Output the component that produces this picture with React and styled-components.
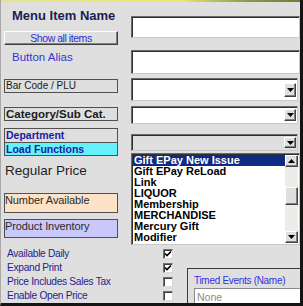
import React from 'react';
import styled, { createGlobalStyle } from 'styled-components';

const GlobalStyle = createGlobalStyle`
  html, body {
    margin: 0;
    padding: 0;
    background: #e0dfe0;
  }
  body {
    font-family: "Liberation Sans", Arial, sans-serif;
  }
  * {
    box-sizing: border-box;
  }
`;

const Window = styled.div`
  width: 303px;
  height: 306px;
  overflow: hidden;
  display: flex;
  flex-direction: column;
  background: #e0dfe0;
  border-left: 1px solid #a8a8a8;
  border-right: 3px solid #141414;
  border-bottom: 3px solid #141414;
`;

const TopStrip = styled.div`
  flex: none;
  height: 2px;
  background: linear-gradient(to right, #e4e290 0%, #ece872 60%, #8c9a4a 82%, #6e7e3a 100%);
`;

const TopSection = styled.div`
  display: flex;
  gap: 13px;
  padding-left: 3px;
`;

const LeftCol = styled.div`
  width: 114px;
  display: flex;
  flex-direction: column;
  padding-top: 6px;
`;

const RightCol = styled.div`
  width: 169px;
  display: flex;
  flex-direction: column;
  align-items: flex-start;
  padding-top: 14px;
`;

const Title = styled.div`
  margin-left: 8px;
  font-size: 13px;
  font-weight: bold;
  line-height: 15px;
  color: #1c1c50;
  white-space: nowrap;
`;

const RaisedButton = styled.div`
  margin-top: 8px;
  height: 14px;
  background: #e0dfe0;
  border: 1px solid;
  border-color: #ffffff #404040 #404040 #ffffff;
  box-shadow: inset -1px -1px 0 #808080;
  font-size: 10.5px;
  letter-spacing: -0.45px;
  line-height: 12px;
  text-align: center;
  color: #2b2bd6;
`;

const AliasLabel = styled.div`
  margin-top: 5px;
  margin-left: 8px;
  font-size: 11.5px;
  line-height: 15px;
  color: #3434d0;
`;

const FieldTag = styled.div`
  margin-top: ${(p) => p.$mt}px;
  height: 14px;
  padding-left: 1px;
  border: 1px solid #505050;
  font-size: ${(p) => (p.$bold ? '11.5px' : '10px')};
  font-weight: ${(p) => (p.$bold ? 'bold' : 'normal')};
  line-height: 12px;
  color: #1a1a1a;
  white-space: nowrap;
`;

const DeptGroup = styled.div`
  margin-top: 7px;
  border: 1px solid #505050;
`;

const DeptRow = styled.div`
  height: 13px;
  padding-left: 1px;
  background: ${(p) => (p.$load ? '#66f2fa' : 'transparent')};
  border-top: ${(p) => (p.$load ? '1px solid #505050' : 'none')};
  font-size: 10.5px;
  font-weight: bold;
  line-height: 12px;
  color: #1a1aa8;
`;

const PriceLabel = styled.div`
  margin-top: 7px;
  padding-left: 1px;
  font-size: 13.5px;
  line-height: 16px;
  color: #1e1e1e;
`;

const ColorBox = styled.div`
  margin-top: ${(p) => p.$mt}px;
  height: ${(p) => p.$h}px;
  background: ${(p) => p.$bg};
  border: 1px solid #505050;
  font-size: 11px;
  letter-spacing: -0.1px;
  line-height: 13px;
  color: #2a2a2a;
`;

const Sunken = styled.div`
  margin-top: ${(p) => p.$mt}px;
  width: ${(p) => p.$w}px;
  height: ${(p) => p.$h}px;
  flex: none;
  display: flex;
  align-items: center;
  justify-content: flex-end;
  padding-right: 1px;
  background: ${(p) => (p.$disabled ? '#e0dfe0' : '#ffffff')};
  border: 1px solid;
  border-color: #6a6a6a #c8c8c8 #c8c8c8 #6a6a6a;
  box-shadow: inset 1px 1px 0 #303030;
`;

const ArrowButton = styled.div`
  width: 12px;
  height: ${(p) => p.$h}px;
  display: flex;
  align-items: center;
  justify-content: center;
  background: #e0dfe0;
  border: 1px solid;
  border-color: #ffffff #404040 #404040 #ffffff;
  box-shadow: inset -1px -1px 0 #808080;
`;

const ListBox = styled.div`
  margin-top: 2px;
  width: 169px;
  height: 92px;
  display: flex;
  padding: 1px;
  background: #ffffff;
  border: 1px solid;
  border-color: #6a6a6a #c8c8c8 #c8c8c8 #6a6a6a;
  box-shadow: inset 1px 1px 0 #303030;
`;

const Items = styled.div`
  flex: 1;
  min-width: 0;
  display: flex;
  flex-direction: column;
`;

const Item = styled.div`
  height: 11px;
  padding-left: 1px;
  font-size: 11px;
  font-weight: bold;
  line-height: 11px;
  white-space: nowrap;
  overflow: hidden;
  background: ${(p) => (p.$selected ? '#0f2a82' : 'transparent')};
  color: ${(p) => (p.$selected ? '#ffffff' : '#000000')};
`;

const ScrollBar = styled.div`
  width: 13px;
  display: flex;
  flex-direction: column;
  background: #eceae6;
`;

const ScrollButton = styled.div`
  height: 12px;
  display: flex;
  align-items: center;
  justify-content: center;
  background: #e0dfe0;
  border: 1px solid;
  border-color: #ffffff #404040 #404040 #ffffff;
  box-shadow: inset -1px -1px 0 #808080;
`;

const Track = styled.div`
  flex: 1;
  background-color: #eeece8;
  background-image: radial-gradient(#d8d6d2 0.6px, transparent 0.7px);
  background-size: 2px 2px;
`;

const Thumb = styled(ScrollButton)`
  margin-top: 20px;
  height: 18px;
`;

const BottomSection = styled.div`
  display: flex;
  margin-top: 4px;
  padding-left: 6px;
`;

const CheckGrid = styled.div`
  flex: none;
  display: grid;
  grid-template-columns: 156px 10px;
  grid-auto-rows: 10px;
  row-gap: 4px;
  align-items: center;
`;

const CheckLabel = styled.div`
  font-size: 10.2px;
  letter-spacing: -0.3px;
  line-height: 10px;
  color: #23238e;
  white-space: nowrap;
`;

const CheckBox = styled.div`
  width: 10px;
  height: 10px;
  display: flex;
  align-items: center;
  justify-content: center;
  background: #ffffff;
  border: 1px solid;
  border-color: #707070 #d8d8d8 #d8d8d8 #707070;
  box-shadow: inset 1px 1px 0 #404040;
`;

const Panel = styled.div`
  flex: 1;
  margin-left: 14px;
  margin-top: 19px;
  height: 60px;
  padding: 6px 0 0 6px;
  border-top: 1px solid #3a3a3a;
  border-left: 1px solid #3a3a3a;
`;

const PanelTitle = styled.div`
  font-size: 10px;
  letter-spacing: -0.3px;
  line-height: 12px;
  color: #3232e0;
  white-space: nowrap;
`;

const NoneInput = styled.div`
  margin-top: 1px;
  height: 30px;
  padding: 2px 0 0 2px;
  background: #ffffff;
  border-top: 1px solid #8a8a8a;
  border-left: 1px solid #8a8a8a;
  font-size: 10.5px;
  line-height: 12px;
  color: #8a8a8a;
`;

const Triangle = ({ up }) => (
  <svg width="7" height="4" viewBox="0 0 7 4">
    <polygon points={up ? '0,4 7,4 3.5,0' : '0,0 7,0 3.5,4'} fill="#000" />
  </svg>
);

const Check = () => (
  <svg width="8" height="8" viewBox="0 0 8 8">
    <polyline points="1,3.5 3,5.5 7,1.5" fill="none" stroke="#000" strokeWidth="1.6" />
  </svg>
);

const functions = [
  'Gift EPay New Issue',
  'Gift EPay ReLoad',
  'Link',
  'LIQUOR',
  'Membership',
  'MERCHANDISE',
  'Mercury Gift',
  'Modifier',
];

const options = [
  { label: 'Available Daily', checked: true },
  { label: 'Expand Print', checked: true },
  { label: 'Price Includes Sales Tax', checked: false },
  { label: 'Enable Open Price', checked: false },
];

export default function App() {
  return (
    <>
      <GlobalStyle />
      <Window>
        <TopStrip />
        <TopSection>
          <LeftCol>
            <Title>Menu Item Name</Title>
            <RaisedButton>Show all items</RaisedButton>
            <AliasLabel>Button Alias</AliasLabel>
            <FieldTag $mt={14}>Bar Code / PLU</FieldTag>
            <FieldTag $mt={14} $bold>Category/Sub Cat.</FieldTag>
            <DeptGroup>
              <DeptRow>Department</DeptRow>
              <DeptRow $load>Load Functions</DeptRow>
            </DeptGroup>
            <PriceLabel>Regular Price</PriceLabel>
            <ColorBox $mt={14} $h={20} $bg="#fde2c8">Number Available</ColorBox>
            <ColorBox $mt={6} $h={19} $bg="#c8c8fa">Product Inventory</ColorBox>
          </LeftCol>
          <RightCol>
            <Sunken $mt={0} $w={169} $h={22} />
            <Sunken $mt={12} $w={169} $h={24} />
            <Sunken $mt={4} $w={167} $h={23}>
              <ArrowButton $h={14}><Triangle /></ArrowButton>
            </Sunken>
            <Sunken $mt={5} $w={167} $h={18}>
              <ArrowButton $h={12}><Triangle /></ArrowButton>
            </Sunken>
            <Sunken $mt={10} $w={167} $h={17} $disabled>
              <ArrowButton $h={11}><Triangle /></ArrowButton>
            </Sunken>
            <ListBox>
              <Items>
                {functions.map((name, i) => (
                  <Item key={name} $selected={i === 0}>{name}</Item>
                ))}
              </Items>
              <ScrollBar>
                <ScrollButton><Triangle up /></ScrollButton>
                <Track>
                  <Thumb />
                </Track>
                <ScrollButton><Triangle /></ScrollButton>
              </ScrollBar>
            </ListBox>
          </RightCol>
        </TopSection>
        <BottomSection>
          <CheckGrid>
            {options.map((o) => (
              <React.Fragment key={o.label}>
                <CheckLabel>{o.label}</CheckLabel>
                <CheckBox>{o.checked && <Check />}</CheckBox>
              </React.Fragment>
            ))}
          </CheckGrid>
          <Panel>
            <PanelTitle>Timed Events (Name)</PanelTitle>
            <NoneInput>None</NoneInput>
          </Panel>
        </BottomSection>
      </Window>
    </>
  );
}
